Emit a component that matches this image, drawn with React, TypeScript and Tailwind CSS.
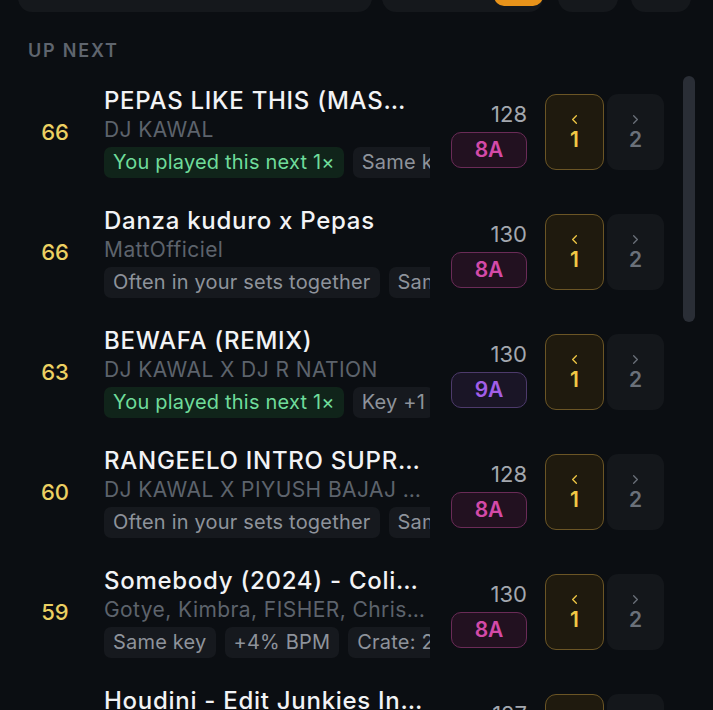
import { ChevronLeft, ChevronRight } from 'lucide-react';

type Tag = { label: string; green?: boolean };

interface Track {
  score: number;
  title: string;
  artist: string;
  tags: Tag[];
  bpm: number;
  keyName: string;
}

const TRACKS: Track[] = [
  { score: 66, title: 'PEPAS LIKE THIS (MAS…', artist: 'DJ KAWAL', tags: [{ label: 'You played this next 1×', green: true }, { label: 'Same key' }], bpm: 128, keyName: '8A' },
  { score: 66, title: 'Danza kuduro x Pepas', artist: 'MattOfficiel', tags: [{ label: 'Often in your sets together' }, { label: 'Same key' }], bpm: 130, keyName: '8A' },
  { score: 63, title: 'BEWAFA (REMIX)', artist: 'DJ KAWAL X DJ R NATION', tags: [{ label: 'You played this next 1×', green: true }, { label: 'Key +1' }], bpm: 130, keyName: '9A' },
  { score: 60, title: 'RANGEELO INTRO SUPR…', artist: 'DJ KAWAL X PIYUSH BAJAJ …', tags: [{ label: 'Often in your sets together' }, { label: 'Same key' }], bpm: 128, keyName: '8A' },
  { score: 59, title: 'Somebody (2024) - Coli…', artist: 'Gotye, Kimbra, FISHER, Chris…', tags: [{ label: 'Same key' }, { label: '+4% BPM' }, { label: 'Crate: 2024' }], bpm: 130, keyName: '8A' },
  { score: 58, title: 'Houdini - Edit Junkies In…', artist: 'Dua Lipa', tags: [{ label: 'Same key' }], bpm: 127, keyName: '8A' },
];

function KeyBadge({ name }: { name: string }) {
  const purple = name === '9A';
  return (
    <div
      className={
        purple
          ? 'w-[76px] h-[36px] rounded-[10px] border-[1.5px] border-[#4d3a6b] bg-[#1a1526] flex items-center justify-center text-[21px] leading-[24px] font-semibold text-[#a25ee8]'
          : 'w-[76px] h-[36px] rounded-[10px] border-[1.5px] border-[#6a2b57] bg-[#221120] flex items-center justify-center text-[21px] leading-[24px] font-semibold text-[#d34aa8]'
      }
    >
      {name}
    </div>
  );
}

function TrackRow({ t }: { t: Track }) {
  return (
    <div className="h-[120px] flex items-center pl-[28px]">
      <div className="w-[54px] text-center text-[22px] font-medium text-[#ecd062]">{t.score}</div>
      <div className="ml-[22px] w-[326px] overflow-hidden">
        <div className="h-[28px] leading-[28px] text-[24px] tracking-[0.03em] font-medium text-[#f2f3f5] whitespace-nowrap">{t.title}</div>
        <div className="mt-[3px] h-[24px] leading-[24px] text-[21px] tracking-[0.02em] text-[#5d636c] whitespace-nowrap">{t.artist}</div>
        <div className="mt-[5px] flex gap-[9px] whitespace-nowrap">
          {t.tags.map((tag, i) => (
            <span
              key={i}
              className={
                tag.green
                  ? 'h-[31px] px-[9px] rounded-[7px] bg-[#10241a] text-[#6fdc9b] text-[20px] tracking-[0.01em] leading-[31px] flex-shrink-0'
                  : 'h-[31px] px-[9px] rounded-[7px] bg-[#16191e] text-[#8e939b] text-[20px] tracking-[0.01em] leading-[31px] flex-shrink-0'
              }
            >
              {tag.label}
            </span>
          ))}
        </div>
      </div>
      <div className="ml-[21px] mt-[4px] w-[76px] flex flex-col items-end gap-[5px]">
        <div className="h-[26px] leading-[26px] text-[22px] text-[#a3a7ae]">{t.bpm}</div>
        <KeyBadge name={t.keyName} />
      </div>
      <div className="ml-[18px] w-[59px] h-[76px] rounded-[11px] border-[1.5px] border-[#6b5525] bg-[#1f1a0e] flex flex-col items-center justify-center text-[#f0c845]">
        <ChevronLeft className="w-[15px] h-[15px]" strokeWidth={2} />
        <span className="text-[21px] font-semibold leading-[26px]">1</span>
      </div>
      <div className="ml-[3px] w-[57px] h-[76px] rounded-[11px] bg-[#14171b] flex flex-col items-center justify-center text-[#6a7079]">
        <ChevronRight className="w-[15px] h-[15px]" strokeWidth={2} />
        <span className="text-[21px] font-semibold leading-[26px]">2</span>
      </div>
    </div>
  );
}

export default function App() {
  return (
    <div className="relative w-[713px] h-[710px] overflow-hidden bg-[#0b0e12] font-['Inter',sans-serif]">
      <div className="flex items-end h-[12px] pl-[18px]">
        <div className="w-[354px] h-[40px] rounded-b-[14px] bg-[#15181c]" />
        <div className="ml-[10px] w-[161px] h-[40px] rounded-b-[14px] bg-[#15181c] flex items-end justify-end">
          <div className="w-[49px] h-[30px] rounded-b-[10px] bg-[#e8931a] mb-[6px]" />
        </div>
        <div className="ml-[15px] w-[60px] h-[40px] rounded-b-[14px] bg-[#15181c]" />
        <div className="ml-[13px] w-[60px] h-[40px] rounded-b-[14px] bg-[#15181c]" />
      </div>

      <div className="pl-[28px] mt-[30px] text-[18px] font-semibold tracking-[0.1em] text-[#5f656e] leading-[18px]">UP NEXT</div>

      <div className="mt-[12px]">
        {TRACKS.map((t, i) => (
          <TrackRow key={i} t={t} />
        ))}
      </div>

      <div className="absolute left-[683px] top-[76px] w-[12px] h-[246px] rounded-full bg-[#2a2e36]" />
    </div>
  );
}
